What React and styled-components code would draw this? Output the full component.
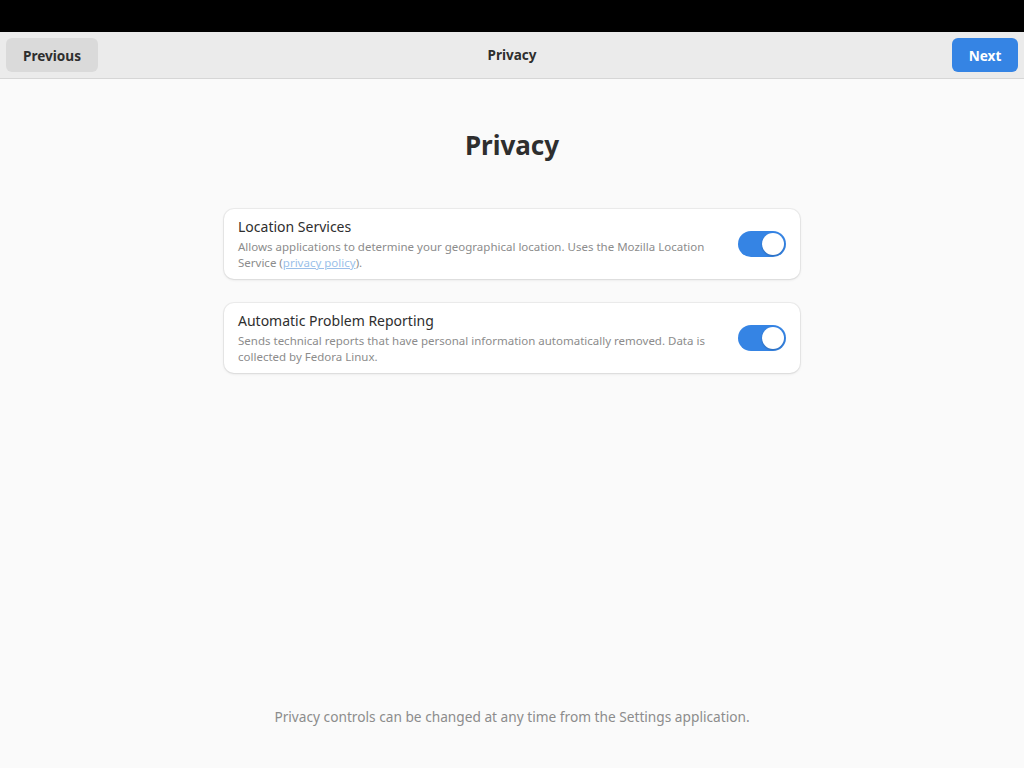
import React, { useState } from 'react'
import styled, { createGlobalStyle } from 'styled-components'

const GlobalStyle = createGlobalStyle`
    html, body {
        margin: 0;
        padding: 0;
        height: 100%;
        background: #000;
        font-family: "Noto Sans", "Open Sans", sans-serif;
    }
    #root {
        height: 100%;
    }
`

const Screen = styled.div`
    height: 768px;
    display: flex;
    flex-direction: column;
    background: #000;
`

const TopBar = styled.div`
    height: 32px;
    flex-shrink: 0;
    background: #000;
`

const Window = styled.div`
    flex: 1;
    display: flex;
    flex-direction: column;
    background: #fafafa;
`

const HeaderBar = styled.header`
    height: 46px;
    display: flex;
    align-items: center;
    justify-content: space-between;
    padding: 0 6px;
    background: #ebebeb;
    border-bottom: 1px solid #d6d6d6;
    position: relative;
`

const HeaderTitle = styled.div`
    position: absolute;
    left: 0;
    right: 0;
    text-align: center;
    font-size: 13.5px;
    font-weight: 700;
    color: #2e2e2e;
    pointer-events: none;
`

const HeaderButton = styled.button`
    height: 34px;
    padding: 0 16px;
    border: none;
    border-radius: 6px;
    font-family: inherit;
    font-size: 13.6px;
    font-weight: 700;
    background: ${p => (p.$suggested ? '#3584e4' : '#dadada')};
    color: ${p => (p.$suggested ? '#ffffff' : '#2e2e2e')};
    min-width: ${p => (p.$suggested ? '66px' : '92px')};
`

const Content = styled.main`
    flex: 1;
    display: flex;
    flex-direction: column;
    align-items: center;
    padding-top: 48px;
`

const Heading = styled.h1`
    margin: 0 0 46px;
    font-size: 26px;
    font-weight: 700;
    color: #2e2e2e;
    line-height: 36px;
`

const CardList = styled.div`
    width: 576px;
    display: flex;
    flex-direction: column;
    gap: 24px;
`

const Card = styled.div`
    height: 70px;
    box-sizing: border-box;
    display: flex;
    align-items: center;
    gap: 24px;
    padding: 0 14px;
    background: #ffffff;
    border-radius: 10px;
    box-shadow: 0 0 0 1px rgba(0, 0, 0, 0.05), 0 1px 3px rgba(0, 0, 0, 0.1);
`

const CardText = styled.div`
    flex: 1;
    display: flex;
    flex-direction: column;
`

const CardTitle = styled.div`
    font-size: 14px;
    color: #2e2e2e;
    line-height: 20px;
    margin-bottom: 2px;
`

const CardDesc = styled.div`
    font-size: 11.5px;
    color: #8c8c8c;
    line-height: 16px;
`

const PolicyLink = styled.a`
    color: #9bbfe9;
    text-decoration: underline;
`

const SwitchTrack = styled.button`
    width: 48px;
    height: 26px;
    flex-shrink: 0;
    padding: 0;
    border: none;
    border-radius: 13px;
    background: ${p => (p.$on ? '#3584e4' : '#d5d5d5')};
    display: flex;
    align-items: center;
    justify-content: ${p => (p.$on ? 'flex-end' : 'flex-start')};
    cursor: pointer;
`

const SwitchKnob = styled.span`
    width: 22px;
    height: 22px;
    margin: 0 2px;
    border-radius: 50%;
    background: #ffffff;
    box-shadow: 0 1px 2px rgba(0, 0, 0, 0.2);
`

const Footer = styled.div`
    margin-top: auto;
    padding-bottom: 42px;
    font-size: 13.7px;
    color: #8c8c8c;
`

const Switch = ({ on, onToggle }) => (
    <SwitchTrack $on={on} onClick={onToggle}>
        <SwitchKnob />
    </SwitchTrack>
)

const App = () => {
    const [location, setLocation] = useState(true)
    const [reporting, setReporting] = useState(true)

    return (
        <Screen>
            <GlobalStyle />
            <TopBar />
            <Window>
                <HeaderBar>
                    <HeaderButton>Previous</HeaderButton>
                    <HeaderTitle>Privacy</HeaderTitle>
                    <HeaderButton $suggested>Next</HeaderButton>
                </HeaderBar>
                <Content>
                    <Heading>Privacy</Heading>
                    <CardList>
                        <Card>
                            <CardText>
                                <CardTitle>Location Services</CardTitle>
                                <CardDesc>
                                    Allows applications to determine your geographical location. Uses the Mozilla Location
                                    Service (<PolicyLink href="#">privacy policy</PolicyLink>).
                                </CardDesc>
                            </CardText>
                            <Switch on={location} onToggle={() => setLocation(!location)} />
                        </Card>
                        <Card>
                            <CardText>
                                <CardTitle>Automatic Problem Reporting</CardTitle>
                                <CardDesc>
                                    Sends technical reports that have personal information automatically removed. Data is
                                    collected by Fedora Linux.
                                </CardDesc>
                            </CardText>
                            <Switch on={reporting} onToggle={() => setReporting(!reporting)} />
                        </Card>
                    </CardList>
                    <Footer>Privacy controls can be changed at any time from the Settings application.</Footer>
                </Content>
            </Window>
        </Screen>
    )
}

export default App
